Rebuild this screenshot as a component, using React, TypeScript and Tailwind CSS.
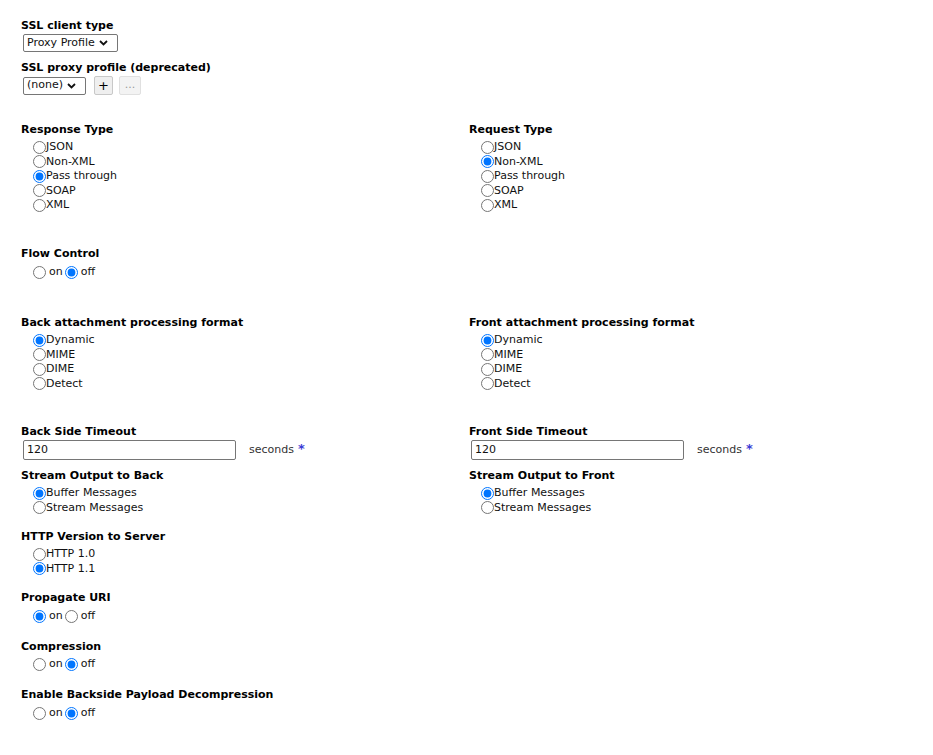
import React from "react";

const F = { fontFamily: '"DejaVu Sans", Verdana, sans-serif' };

function Label({ children, className = "" }: { children: React.ReactNode; className?: string }) {
  return <div className={"h-[14px] leading-[14px] font-bold text-[11px] text-black whitespace-nowrap " + className}>{children}</div>;
}

function Radio({ checked }: { checked?: boolean }) {
  return (
    <input
      type="radio"
      checked={!!checked}
      readOnly
      className="m-0 w-[13px] h-[13px] shrink-0"
    />
  );
}

function RadioList({ items, sel, className = "" }: { items: string[]; sel: number; className?: string }) {
  return (
    <div className={"pl-[12px] " + className}>
      {items.map((t, i) => (
        <div key={t} className="h-[14.5px] flex items-center text-[11px] text-[#111] whitespace-nowrap">
          <Radio checked={i === sel} />
          <span className="leading-[14px]">{t}</span>
        </div>
      ))}
    </div>
  );
}

function OnOff({ on, className = "" }: { on: boolean; className?: string }) {
  return (
    <div className={"pl-[12px] h-[16px] flex items-center text-[11px] text-[#111] " + className}>
      <Radio checked={on} />
      <span className="ml-[3px] mr-[2px]">on</span>
      <Radio checked={!on} />
      <span className="ml-[3px]">off</span>
    </div>
  );
}

function Chevron() {
  return (
    <svg width="9" height="6" viewBox="0 0 9 6" className="ml-[4px]">
      <path d="M1 1 L4.5 4.5 L8 1" stroke="#111" strokeWidth="1.8" fill="none" />
    </svg>
  );
}

function FakeSelect({ text, w }: { text: string; w: string }) {
  return (
    <div className={"h-[18px] border border-[#767676] rounded-[2px] bg-white flex items-center pl-[3px] text-[11px] text-[#111] " + w}>
      <span>{text}</span>
      <Chevron />
    </div>
  );
}

function Timeout({ className = "" }: { className?: string }) {
  return (
    <div className={"flex items-center ml-[2px] " + className}>
      <div className="w-[213px] h-[20px] border border-[#767676] rounded-[2px] flex items-center pl-[3px] text-[11px] text-[#111]">120</div>
      <span className="ml-[13px] text-[11px] text-[#333]">seconds</span>
      <span className="ml-[4px] text-[13px] font-bold text-[#3b3bd6] leading-[10px] -mt-[2px]">*</span>
    </div>
  );
}

export default function App() {
  return (
    <div style={F} className="bg-white w-[933px] h-[755px] pl-[21px] pt-[19px] text-[11px]">
      <Label>SSL client type</Label>
      <div className="mt-[1px] ml-[2px]">
        <FakeSelect text="Proxy Profile" w="w-[95px]" />
      </div>
      <Label className="mt-[9px]">SSL proxy profile (deprecated)</Label>
      <div className="mt-[1px] ml-[2px] flex items-center">
        <FakeSelect text="(none)" w="w-[63px]" />
        <div className="ml-[8px] w-[19px] h-[19px] border border-[#c8c8c8] bg-[#efefef] rounded-[2px] flex items-center justify-center text-[13px] text-black">+</div>
        <div className="ml-[6px] w-[22px] h-[19px] border border-[#e0e0e0] bg-[#f3f3f3] rounded-[2px] flex items-center justify-center text-[11px] text-[#999]">...</div>
      </div>

      <div className="grid grid-cols-[448px_1fr] mt-[28px]">
        <div>
          <Label>Response Type</Label>
          <RadioList className="mt-[3px]" items={["JSON", "Non-XML", "Pass through", "SOAP", "XML"]} sel={2} />
        </div>
        <div>
          <Label>Request Type</Label>
          <RadioList className="mt-[3px]" items={["JSON", "Non-XML", "Pass through", "SOAP", "XML"]} sel={1} />
        </div>
      </div>

      <Label className="mt-[34.5px]">Flow Control</Label>
      <OnOff on={false} className="mt-[3px]" />

      <div className="grid grid-cols-[448px_1fr] mt-[36px]">
        <div>
          <Label>Back attachment processing format</Label>
          <RadioList className="mt-[3px]" items={["Dynamic", "MIME", "DIME", "Detect"]} sel={0} />
        </div>
        <div>
          <Label>Front attachment processing format</Label>
          <RadioList className="mt-[3px]" items={["Dynamic", "MIME", "DIME", "Detect"]} sel={0} />
        </div>
      </div>

      <div className="grid grid-cols-[448px_1fr] mt-[34px]">
        <div>
          <Label>Back Side Timeout</Label>
          <Timeout className="mt-[1px]" />
          <Label className="mt-[9px]">Stream Output to Back</Label>
          <RadioList className="mt-[3px]" items={["Buffer Messages", "Stream Messages"]} sel={0} />
        </div>
        <div>
          <Label>Front Side Timeout</Label>
          <Timeout className="mt-[1px]" />
          <Label className="mt-[9px]">Stream Output to Front</Label>
          <RadioList className="mt-[3px]" items={["Buffer Messages", "Stream Messages"]} sel={0} />
        </div>
      </div>

      <Label className="mt-[15px]">HTTP Version to Server</Label>
      <RadioList className="mt-[3px]" items={["HTTP 1.0", "HTTP 1.1"]} sel={1} />

      <Label className="mt-[15px]">Propagate URI</Label>
      <OnOff on={true} className="mt-[3px]" />

      <Label className="mt-[16px]">Compression</Label>
      <OnOff on={false} className="mt-[2px]" />

      <Label className="mt-[16px]">Enable Backside Payload Decompression</Label>
      <OnOff on={false} className="mt-[3px]" />
    </div>
  );
}
